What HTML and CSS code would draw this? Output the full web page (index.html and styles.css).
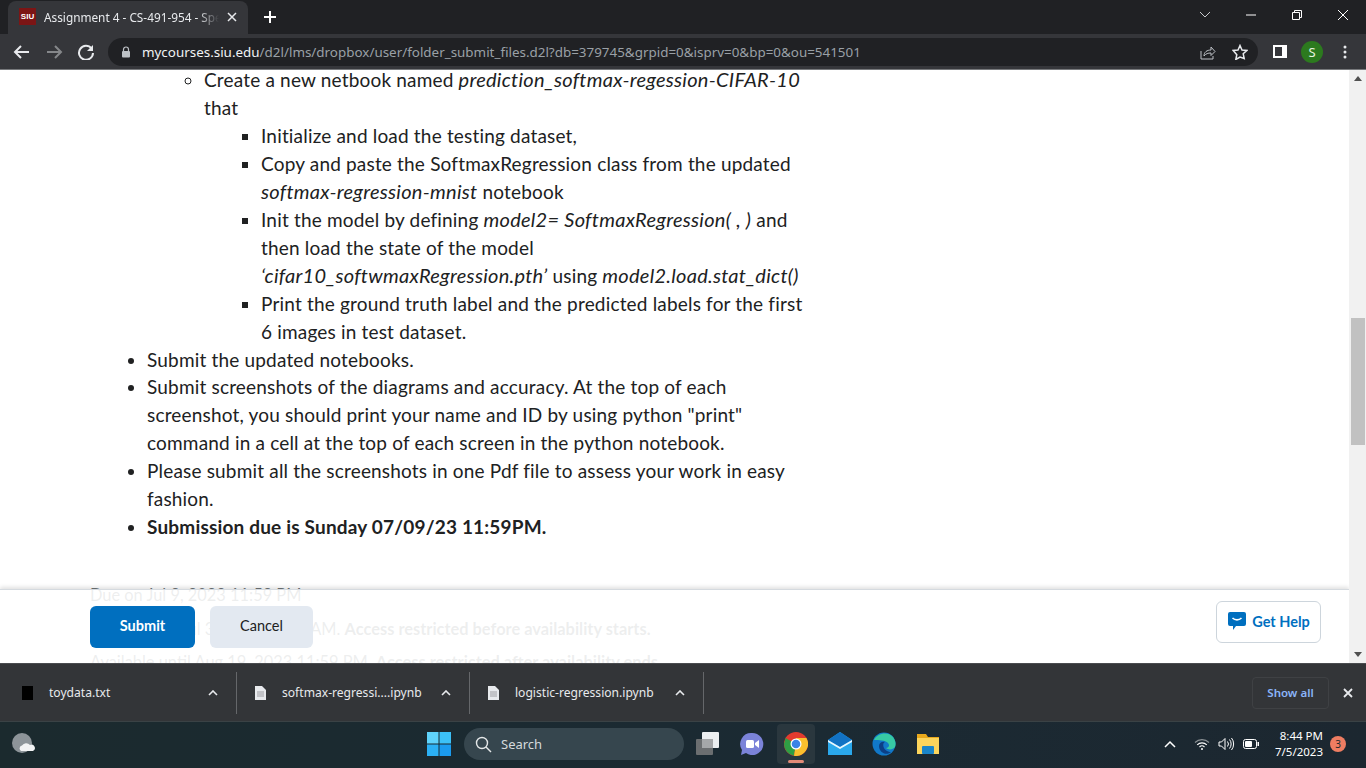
FILE: index.html
```html
<!DOCTYPE html>
<html lang="en">
<head>
    <meta charset="UTF-8">
    <title>Assignment 4 - CS-491-954</title>
    <link rel="stylesheet" href="styles.css">
</head>
<body>
    <!-- browser tabs -->
    <div class="tabstrip">
        <div class="tab">
            <span class="favicon">SIU</span>
            <span class="tab-title">Assignment 4 - CS-491-954 - Spe</span>
            <svg class="tab-close" width="10" height="10" viewBox="0 0 10 10"><path d="M1 1l8 8M9 1l-8 8" stroke="#e8eaed" stroke-width="1.5"/></svg>
        </div>
        <svg class="new-tab" width="14" height="14" viewBox="0 0 14 14"><path d="M7 1v12M1 7h12" stroke="#fff" stroke-width="2"/></svg>
        <div class="window-btns">
            <svg width="46" height="12" viewBox="0 0 46 12"><path d="M18 3l5 5 5-5" fill="none" stroke="#c8cacd" stroke-width="1"/></svg>
            <svg width="46" height="12" viewBox="0 0 46 12"><path d="M18 6h10" stroke="#fff" stroke-width="1"/></svg>
            <svg width="46" height="12" viewBox="0 0 46 12"><path d="M18.5 3.5h7v7h-7zM20.5 3.5v-2h7v7h-2" fill="none" stroke="#fff" stroke-width="1"/></svg>
            <svg width="46" height="12" viewBox="0 0 46 12"><path d="M18 1l10 10M28 1L18 11" stroke="#fff" stroke-width="1"/></svg>
        </div>
    </div>

    <!-- address bar -->
    <div class="toolbar">
        <svg class="nav-icon" width="32" height="16" viewBox="0 0 32 16"><path d="M23 8H9M15 2L9 8l6 6" fill="none" stroke="#e8eaed" stroke-width="2"/></svg>
        <svg class="nav-icon" width="32" height="16" viewBox="0 0 32 16"><path d="M9 8h14M17 2l6 6-6 6" fill="none" stroke="#85878a" stroke-width="2"/></svg>
        <svg class="nav-icon" width="32" height="16" viewBox="0 0 32 16"><path d="M21.5 4.5A7 7 0 1 0 23 9" fill="none" stroke="#e8eaed" stroke-width="2"/><path d="M23 1v6h-6z" fill="#e8eaed"/></svg>
        <div class="urlbar">
            <svg class="lock" width="10" height="12" viewBox="0 0 10 12"><path d="M2.5 5V3.5a2.5 2.5 0 0 1 5 0V5" fill="none" stroke="#bdc1c6" stroke-width="1.2"/><rect x="1" y="5" width="8" height="6.5" rx="1" fill="#bdc1c6"/></svg>
            <span class="url"><span class="host">mycourses.siu.edu</span>/d2l/lms/dropbox/user/folder_submit_files.d2l?db=379745&amp;grpid=0&amp;isprv=0&amp;bp=0&amp;ou=541501</span>
            <svg class="url-icon" width="16" height="16" viewBox="0 0 16 16"><path d="M1 7v8h12v-3" fill="none" stroke="#bdc1c6" stroke-width="1"/><path d="M4 12c0-4 3-6 7-6V3l4 4.500-4 4V9c-3 0-5 .5-7 3z" fill="none" stroke="#bdc1c6" stroke-width="1"/></svg>
            <svg class="url-icon star" width="16" height="16" viewBox="0 0 16 16"><path d="M8 1.500l2 4.500 4.800.5-3.600 3.200 1 4.800L8 13l-4.200 2.500 1-4.800L1.200 6.500 6 6z" fill="none" stroke="#e8eaed" stroke-width="1.500"/></svg>
        </div>
        <span class="side-panel"></span>
        <span class="avatar">S</span>
        <svg class="kebab" width="4" height="14" viewBox="0 0 4 14"><circle cx="2" cy="2" r="1.500" fill="#e8eaed"/><circle cx="2" cy="7" r="1.500" fill="#e8eaed"/><circle cx="2" cy="12" r="1.500" fill="#e8eaed"/></svg>
    </div>

    <!-- page -->
    <div class="viewport">
        <div class="page">
            <div class="content">
                <ul class="list">
                    <li class="no-bullet">
                        <ul class="sub">
                            <li>Create a new netbook named <em>prediction_softmax-regession-CIFAR-10</em> that
                                <ul class="subsub">
                                    <li>Initialize and load the testing dataset,</li>
                                    <li>Copy and paste the SoftmaxRegression class from the updated <em>softmax-regression-mnist</em> notebook</li>
                                    <li>Init the model by defining <em>model2= SoftmaxRegression( , )</em> and then load the state of the model <em>‘cifar10_softwmaxRegression.pth’</em> using <em>model2.load.stat_dict()</em></li>
                                    <li>Print the ground truth label and the predicted labels for the first 6 images in test dataset.</li>
                                </ul>
                            </li>
                        </ul>
                    </li>
                    <li>Submit the updated notebooks.</li>
                    <li>Submit screenshots of the diagrams and accuracy. At the top of each screenshot, you should print your name and ID by using python "print" command in a cell at the top of each screen in the python notebook.</li>
                    <li>Please submit all the screenshots in one Pdf file to assess your work in easy fashion.</li>
                    <li><strong>Submission due is Sunday 07/09/23 11:59PM.</strong></li>
                </ul>
                <div class="dates">
                    <p>Due on Jul 9, 2023 11:59 PM</p>
                    <p>Available on Jul 3, 2023 12:00 AM. <b>Access restricted before availability starts.</b></p>
                    <p>Available until Aug 19, 2023 11:59 PM. <b>Access restricted after availability ends.</b></p>
                </div>
            </div>
            <div class="floating-footer">
                <button class="btn btn-primary">Submit</button>
                <button class="btn btn-plain">Cancel</button>
                <button class="help">
                    <svg width="20" height="20" viewBox="0 0 20 20"><path d="M3 1h14a2 2 0 0 1 2 2v10a2 2 0 0 1-2 2H9l-3 4v-4H3a2 2 0 0 1-2-2V3a2 2 0 0 1 2-2z" fill="#006fbf"/><path d="M5.500 7c2.500 2.500 6.500 2.500 9 0" fill="none" stroke="#fff" stroke-width="1.600"/></svg>
                    Get Help
                </button>
            </div>
        </div>
        <div class="scrollbar">
            <span class="arrow-up"></span>
            <div class="track"><div class="thumb"></div></div>
            <span class="arrow-down"></span>
        </div>
    </div>

    <!-- downloads -->
    <div class="downloads">
        <div class="dl dl-first">
            <span class="dl-black"></span>
            <span class="dl-name">toydata.txt</span>
            <svg class="caret" width="10" height="6" viewBox="0 0 10 6"><path d="M1 5l4-4 4 4" fill="none" stroke="#e8eaed" stroke-width="1.600"/></svg>
        </div>
        <div class="dl dl-second">
            <svg class="dl-file" width="11" height="14" viewBox="0 0 11 14"><path d="M0 0h7l4 4v10H0z" fill="#e8eaed"/><path d="M2 6h7M2 8h7M2 10h7" stroke="#8a8c8f" stroke-width=".8"/></svg>
            <span class="dl-name">softmax-regressi....ipynb</span>
            <svg class="caret" width="10" height="6" viewBox="0 0 10 6"><path d="M1 5l4-4 4 4" fill="none" stroke="#e8eaed" stroke-width="1.600"/></svg>
        </div>
        <div class="dl dl-third">
            <svg class="dl-file" width="11" height="14" viewBox="0 0 11 14"><path d="M0 0h7l4 4v10H0z" fill="#e8eaed"/><path d="M2 6h7M2 8h7M2 10h7" stroke="#8a8c8f" stroke-width=".8"/></svg>
            <span class="dl-name">logistic-regression.ipynb</span>
            <svg class="caret" width="10" height="6" viewBox="0 0 10 6"><path d="M1 5l4-4 4 4" fill="none" stroke="#e8eaed" stroke-width="1.600"/></svg>
        </div>
        <button class="show-all">Show all</button>
        <svg class="dl-close" width="10" height="10" viewBox="0 0 10 10"><path d="M1 1l8 8M9 1l-8 8" stroke="#e8eaed" stroke-width="1.800"/></svg>
    </div>

    <!-- windows taskbar -->
    <div class="taskbar">
        <svg class="weather" width="24" height="24" viewBox="0 0 24 24"><circle cx="11" cy="11" r="10" fill="#8d9499"/><path d="M10 19a3 3 0 0 1 1-5.500 5 5 0 0 1 8-.5 3 3 0 0 1 3 6z" fill="#f2f3f4"/></svg>
        <div class="task-center">
            <svg class="win" width="24" height="24" viewBox="0 0 24 24"><rect width="11.500" height="11.500" fill="#5fd3fb"/><rect x="12.500" width="11.500" height="11.500" fill="#3cc1f7"/><rect y="12.500" width="11.500" height="11.500" fill="#2bb0f4"/><rect x="12.500" y="12.500" width="11.500" height="11.500" fill="#1b9bee"/></svg>
            <div class="search">
                <svg width="17" height="17" viewBox="0 0 17 17"><circle cx="7" cy="7" r="5.500" fill="none" stroke="#e4e7e8" stroke-width="1.400"/><path d="M11 11l5 5" stroke="#e4e7e8" stroke-width="1.400"/></svg>
                <span>Search</span>
            </div>
            <div class="apps">
                <span class="app"><svg width="24" height="24" viewBox="0 0 24 24"><rect x="0" y="7" width="17" height="16" rx="1" fill="#6b6e70"/><rect x="6" y="0" width="17" height="16" rx="1" fill="#eceff1"/><rect x="6" y="7" width="11" height="9" fill="#a5a7a9"/></svg></span>
                <span class="app"><svg width="24" height="24" viewBox="0 0 24 24"><path d="M12 1a11 11 0 1 1-6 20l-5 2 1-5A11 11 0 0 1 12 1z" fill="#7b83d9"/><rect x="6" y="8" width="8" height="8" rx="1.500" fill="#fff"/><path d="M15 11l4-3v8l-4-3z" fill="#fff"/></svg></span>
                <span class="app app-active"><svg width="24" height="24" viewBox="0 0 24 24"><circle cx="12" cy="12" r="12" fill="#e33b2e"/><path d="M12 12L1.600 6 0 12a12 12 0 0 0 10 11.800z" fill="#2f9e44"/><path d="M12 6h10.400A12 12 0 0 1 10 23.800L12 12z" fill="#fbc02d"/><circle cx="12" cy="12" r="5.500" fill="#fff"/><circle cx="12" cy="12" r="4.300" fill="#3b82e6"/></svg></span>
                <span class="app"><svg width="24" height="24" viewBox="0 0 24 24"><path d="M0 8l12-8 12 8v15H0z" fill="#2aa8ec"/><path d="M0 8l12-8 12 8-12 7z" fill="#1272c4"/><path d="M0 8l12 7 12-7v2L12 17 0 10z" fill="#e9f6fd"/></svg></span>
                <span class="app"><svg width="24" height="24" viewBox="0 0 24 24"><circle cx="12" cy="12" r="11.500" fill="#1178c9"/><path d="M2 8C5 1 16-1 21 5c3 4 3 8 2 10-2 3-7 3-9 1 3 0 4-3 2-5-3-3-9-3-14-3z" fill="#37c9a4"/><path d="M7 14c0-3 3-5 6-4-3 1-2 7 2 9 2 1 3 1 4 1-4 4-12 1-12-6z" fill="#0c3f86"/></svg></span>
                <span class="app"><svg width="24" height="24" viewBox="0 0 24 24"><path d="M1 2h9l2 3h11v17H1z" fill="#e9a91c"/><rect x="1" y="6" width="22" height="16" fill="#fcd55c"/><rect x="6" y="14" width="12" height="8" rx="1" fill="#1a85c9"/></svg></span>
            </div>
        </div>
        <div class="tray">
            <svg width="12" height="8" viewBox="0 0 12 8"><path d="M1 7l5-5 5 5" fill="none" stroke="#fff" stroke-width="1.500"/></svg>
            <svg class="tray-wifi" width="16" height="12" viewBox="0 0 16 12"><path d="M1 4.500a10 10 0 0 1 14 0" fill="none" stroke="#8b9195" stroke-width="1.100"/><path d="M3.200 6.800a7 7 0 0 1 9.600 0M5.500 9a3.600 3.600 0 0 1 5 0" fill="none" stroke="#fff" stroke-width="1.100"/><circle cx="8" cy="11" r="1" fill="#fff"/></svg>
            <svg class="tray-vol" width="17" height="14" viewBox="0 0 17 14"><path d="M1 5h2.500L7 1.500v11L3.500 9H1z" fill="none" stroke="#fff"/><path d="M9.500 4.500a4 4 0 0 1 0 5M11.500 2.500a7 7 0 0 1 0 9M13.500 1a9.500 9.500 0 0 1 0 12" fill="none" stroke="#fff"/></svg>
            <svg class="tray-bat" width="16" height="10" viewBox="0 0 16 10"><rect x=".5" y=".5" width="13" height="9" rx="2" fill="none" stroke="#fff"/><rect x="2" y="2" width="7" height="6" rx="1" fill="#fff"/><rect x="14.500" y="3" width="1.500" height="4" fill="#fff"/></svg>
            <div class="clock">8:44 PM<br>7/5/2023</div>
            <span class="badge">3</span>
        </div>
    </div>
</body>
</html>
```

FILE: styles.css
```css
* {
    box-sizing: border-box;
}
html, body {
    height: 100%;
}
body {
    margin: 0;
    display: flex;
    flex-direction: column;
    height: 768px;
    overflow: hidden;
    font-family: "Noto Sans", sans-serif;
    background: #fff;
}

/* tab strip */
.tabstrip {
    height: 34px;
    flex: none;
    display: flex;
    align-items: center;
    background: #202124;
    color: #e8eaed;
}
.tab {
    width: 240px;
    height: 33px;
    margin: 1px 0 0 8px;
    padding: 0 11px 2px;
    display: flex;
    align-items: center;
    background: #35363a;
    border-radius: 8px 8px 0 0;
}
.favicon {
    width: 17px;
    height: 17px;
    flex: none;
    background: #7c1515;
    color: #fff;
    font: bold 8px/17px "Liberation Sans", sans-serif;
    text-align: center;
}
.tab-title {
    width: 175px;
    margin-left: 8px;
    font-size: 11.8px;
    white-space: nowrap;
    overflow: hidden;
    -webkit-mask-image: linear-gradient(to right, #000 88%, transparent);
}
.tab-close {
    margin-left: 8px;
    flex: none;
}
.new-tab {
    margin-left: 15px;
}
.window-btns {
    margin-left: auto;
    display: flex;
    margin-top: -4px;
}

/* toolbar */
.toolbar {
    height: 36px;
    flex: none;
    display: flex;
    align-items: center;
    padding-left: 6px;
    background: #35363a;
    border-bottom: 1px solid #77797c;
}
.urlbar {
    width: 1150px;
    height: 28px;
    margin-left: 6px;
    padding-left: 13px;
    display: flex;
    align-items: center;
    background: #202124;
    border-radius: 14px;
}
.url {
    margin-left: 11px;
    font-size: 13.42px;
    color: #9aa0a6;
    white-space: nowrap;
}
.host {
    color: #f1f3f4;
}
.url-icon {
    margin-left: auto;
    margin-right: 42px;
    flex: none;
}
.url-icon.star {
    margin-left: -26px;
    margin-right: 10px;
}
.side-panel {
    width: 14px;
    height: 13px;
    margin-left: 15px;
    flex: none;
    background: #35363a;
    border: 2px solid #fff;
    border-right-width: 5px;
}
.avatar {
    width: 22px;
    height: 22px;
    margin-left: 14px;
    flex: none;
    border-radius: 50%;
    background: #2c7a1e;
    color: #e8f5e0;
    font-size: 13px;
    line-height: 22px;
    text-align: center;
}
.kebab {
    margin-left: 20px;
}

/* page */
.viewport {
    height: 593px;
    flex: none;
    display: flex;
}
.page {
    flex: 1;
    position: relative;
    overflow: hidden;
    background: #fff;
}
.content {
    margin-top: -3.88px;
    font-family: Lato, sans-serif;
    font-size: 19px;
    line-height: 27.94px;
    letter-spacing: 0.18px;
    color: #202122;
}
.content em {
    font-size: 20px;
    line-height: 1;
    letter-spacing: 0.27px;
}
.list, .sub, .subsub {
    margin: 0;
    padding: 0;
}
.list {
    width: 720px;
    margin-left: 90px;
    padding-left: 57px;
    list-style: disc;
}
.no-bullet {
    list-style: none;
}
.sub {
    padding-left: 57px;
    list-style: circle;
}
.subsub {
    padding-left: 57px;
    list-style: square;
}
.dates {
    margin: 37px 0 0 90px;
    font-size: 16.4px;
    line-height: 33.5px;
    letter-spacing: 0;
    color: #6e7477;
}
.dates p {
    margin: 0;
    white-space: nowrap;
}
.dates b {
    font-weight: 700;
}
.floating-footer {
    position: absolute;
    left: 0;
    right: 0;
    bottom: 0;
    height: 74px;
    padding: 16px 28px 0 90px;
    display: flex;
    align-items: flex-start;
    background: rgba(255, 255, 255, 0.88);
    border-top: 1px solid #d5dadf;
    box-shadow: 0 -2px 4px rgba(0, 0, 0, 0.12);
}
.btn {
    height: 42px;
    padding: 0 0 3px;
    border: 0;
    border-radius: 6px;
    font-family: Lato, sans-serif;
    font-size: 14.5px;
}
.btn-primary {
    width: 105px;
    background: #006fbf;
    color: #fff;
    font-weight: 700;
}
.btn-plain {
    width: 103px;
    margin-left: 15px;
    background: #e3e9f1;
    color: #202122;
    font-weight: 400;
}
.help {
    width: 105px;
    height: 42px;
    margin: -5px 0 0 auto;
    padding: 0 0 2px;
    display: flex;
    align-items: center;
    justify-content: center;
    gap: 5px;
    background: #fff;
    border: 1px solid #cdd5dc;
    border-radius: 6px;
    color: #006fbf;
    font-family: Lato, sans-serif;
    font-size: 14.5px;
    font-weight: 700;
}

/* scrollbar */
.scrollbar {
    width: 17px;
    flex: none;
    display: flex;
    flex-direction: column;
    align-items: center;
    background: #f1f1f1;
}
.arrow-up, .arrow-down {
    width: 0;
    height: 0;
    flex: none;
    margin: 6px 0;
    border-left: 4px solid transparent;
    border-right: 4px solid transparent;
}
.arrow-up {
    border-bottom: 5px solid #505050;
}
.arrow-down {
    border-top: 5px solid #505050;
}
.track {
    flex: 1;
    width: 100%;
    padding: 231px 1px 0 2px;
}
.thumb {
    height: 127px;
    background: #c1c1c1;
}

/* downloads */
.downloads {
    height: 58px;
    flex: none;
    display: flex;
    align-items: center;
    background: #333538;
    border-top: 1px solid #4a4c4f;
    color: #e8eaed;
    font-size: 12.1px;
}
.dl {
    height: 42px;
    display: flex;
    align-items: center;
    border-right: 1px solid #65676a;
}
.dl-first {
    width: 237px;
    padding: 0 18px 0 22px;
}
.dl-second {
    width: 233px;
    padding: 0 18px;
}
.dl-third {
    width: 234px;
    padding: 0 18px;
}
.dl-black {
    width: 11px;
    height: 14px;
    margin-right: 16px;
    flex: none;
    background: #000;
}
.dl-file {
    margin-right: 16px;
    flex: none;
}
.dl-name {
    white-space: nowrap;
}
.caret {
    margin-left: auto;
    flex: none;
}
.show-all {
    width: 77px;
    height: 32px;
    margin-left: auto;
    padding: 0;
    background: transparent;
    border: 1px solid #3f4144;
    border-radius: 4px;
    color: #8ab4f8;
    font-family: "Noto Sans", sans-serif;
    font-size: 11.5px;
    font-weight: 600;
}
.dl-close {
    margin: 0 13px 0 14px;
    flex: none;
}

/* taskbar */
.taskbar {
    height: 47px;
    flex: none;
    display: flex;
    align-items: center;
    padding: 0 0 2px 11px;
    background: linear-gradient(to right, #1b2a2e, #1b2a33 60%, #1c2730);
    border-top: 1px solid #3a4245;
    color: #fff;
}
.task-center {
    margin-left: 392px;
    display: flex;
    align-items: center;
}
.search {
    width: 220px;
    height: 32px;
    margin-left: 13px;
    padding-left: 11px;
    display: flex;
    align-items: center;
    gap: 9px;
    background: #36464e;
    border-radius: 16px;
    color: #d5dadc;
    font-size: 13px;
}
.apps {
    margin-left: 2px;
    display: flex;
    align-items: center;
}
.app {
    width: 44px;
    height: 40px;
    display: flex;
    align-items: center;
    justify-content: center;
}
.app-active {
    width: 38px;
    margin: 0 3px;
    background: #2a373e;
    border-radius: 4px;
    position: relative;
}
.app-active::after {
    content: "";
    position: absolute;
    left: 11px;
    bottom: 1px;
    width: 16px;
    height: 3px;
    border-radius: 2px;
    background: #e38a78;
}
.tray {
    margin-left: auto;
    display: flex;
    align-items: center;
}
.tray-wifi {
    margin-left: 18px;
}
.tray-vol {
    margin-left: 8px;
}
.tray-bat {
    margin-left: 8px;
}
.clock {
    width: 64px;
    font-size: 11.5px;
    line-height: 16px;
    text-align: right;
}
.badge {
    width: 16px;
    height: 16px;
    margin: 0 20px 0 7px;
    border-radius: 50%;
    background: #ee7d62;
    color: #1b2a2e;
    font-size: 10px;
    line-height: 16px;
    text-align: center;
}
```
